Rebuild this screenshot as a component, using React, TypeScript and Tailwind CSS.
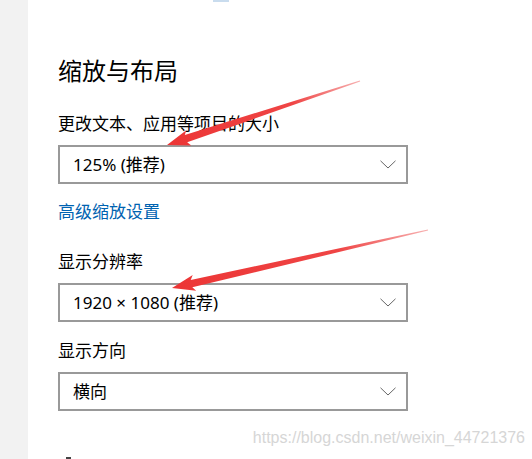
import React from "react";

type Pt = [number, number];

function arrowPoints(A: Pt, T: Pt, L = 20, h = 8, w1 = 3.8, w0 = 0.6): string {
  const dx = T[0] - A[0];
  const dy = T[1] - A[1];
  const len = Math.hypot(dx, dy);
  const ux = dx / len;
  const uy = dy / len;
  const nx = -uy;
  const ny = ux;
  const B: Pt = [T[0] - ux * L, T[1] - uy * L];
  const Bb: Pt = [T[0] - ux * (L + 3), T[1] - uy * (L + 3)];
  const pts: Pt[] = [
    [A[0] + nx * w0, A[1] + ny * w0],
    [B[0] + nx * w1, B[1] + ny * w1],
    [Bb[0] + nx * h, Bb[1] + ny * h],
    T,
    [Bb[0] - nx * h, Bb[1] - ny * h],
    [B[0] - nx * w1, B[1] - ny * w1],
    [A[0] - nx * w0, A[1] - ny * w0],
  ];
  return pts.map((p) => `${p[0].toFixed(1)},${p[1].toFixed(1)}`).join(" ");
}

function Chevron() {
  return (
    <svg width="16" height="9" viewBox="0 0 16 9" className="shrink-0">
      <path d="M0.5 0.8 L8 8 L15.5 0.8" fill="none" stroke="#555" strokeWidth="0.9" />
    </svg>
  );
}

function Select({ value }: { value: string }) {
  return (
    <div className="flex h-[39px] w-[350px] items-center justify-between border-2 border-[#999999] bg-white pl-[13px] pr-[10px]">
      <span className="text-[17px] leading-[24px] text-black">{value}</span>
      <Chevron />
    </div>
  );
}

export default function App() {
  return (
    <div className="relative flex h-[459px] w-[532px] overflow-hidden bg-white font-['Noto_Sans','Noto_Sans_CJK_SC',sans-serif]">
      <div className="w-[28px] shrink-0 bg-[#f2f2f2]" />
      <div className="flex flex-1 flex-col pl-[30px]">
        <div className="ml-[155px] h-[3px] w-[16px] bg-[#c9dcee]" />
        <h1 className="mt-[53px] text-[24px] font-normal leading-[32px] text-black">缩放与布局</h1>
        <div className="mt-[25px] text-[17px] leading-[24px] text-black">更改文本、应用等项目的大小</div>
        <div className="mt-[9px]">
          <Select value="125% (推荐)" />
        </div>
        <div className="mt-[16px] text-[17px] leading-[24px] text-[#0063b1]">高级缩放设置</div>
        <div className="mt-[26px] text-[17px] leading-[24px] text-black">显示分辨率</div>
        <div className="mt-[9px]">
          <Select value="1920 × 1080 (推荐)" />
        </div>
        <div className="mt-[17px] text-[17px] leading-[24px] text-black">显示方向</div>
        <div className="mt-[9px]">
          <Select value="横向" />
        </div>
        <div className="ml-[8px] mt-[46px] h-[2px] w-[5px] bg-[#444]" />
      </div>

      <div className="pointer-events-none absolute right-[7px] top-[428px] font-['Liberation_Sans',sans-serif] text-[16px] leading-[20px] text-[#d6d6d6]">
        https://blog.csdn.net/weixin_44721376
      </div>

      <svg className="pointer-events-none absolute left-0 top-0" width="532" height="459" viewBox="0 0 532 459">
        <defs>
          <linearGradient id="g1" x1="360" y1="81" x2="167" y2="145" gradientUnits="userSpaceOnUse">
            <stop offset="0" stopColor="#f7b0b0" />
            <stop offset="0.35" stopColor="#ef4545" />
            <stop offset="1" stopColor="#ec3535" />
          </linearGradient>
          <linearGradient id="g2" x1="428" y1="230" x2="172" y2="288" gradientUnits="userSpaceOnUse">
            <stop offset="0" stopColor="#f7b0b0" />
            <stop offset="0.35" stopColor="#ef4545" />
            <stop offset="1" stopColor="#ec3535" />
          </linearGradient>
        </defs>
        <polygon points={arrowPoints([360, 81], [167, 145])} fill="url(#g1)" />
        <polygon points={arrowPoints([428, 230], [172, 288])} fill="url(#g2)" />
      </svg>
    </div>
  );
}
